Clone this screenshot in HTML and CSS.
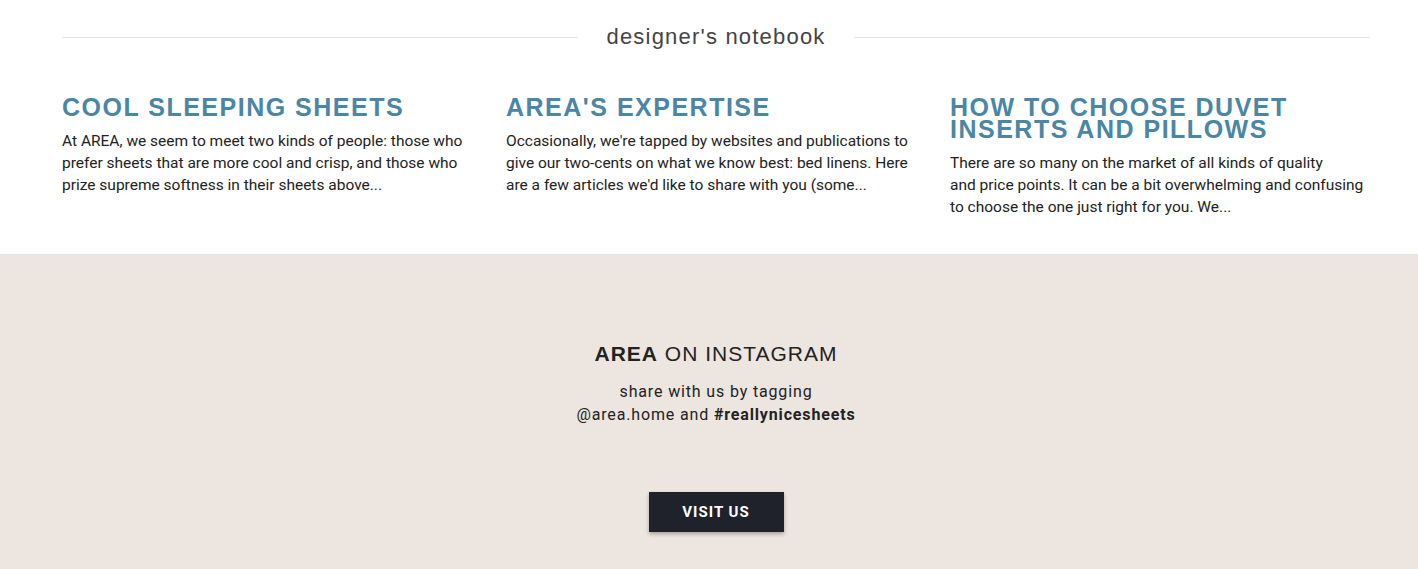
FILE: index.html
```html
<!DOCTYPE html>
<html>
<head>
<meta charset="utf-8">
<link rel="stylesheet" href="styles.css">
</head>
<body>
<section class="notebook">
  <div class="wrap">
    <div class="divider">
      <span class="rule"></span>
      <h2 class="divider-title">designer's notebook</h2>
      <span class="rule"></span>
    </div>
    <div class="posts">
      <article class="post">
        <h3 class="post-title">COOL SLEEPING SHEETS</h3>
        <p class="post-text">At AREA, we seem to meet two kinds of people: those who prefer sheets that are more cool and crisp, and those who prize supreme softness in their sheets above...</p>
      </article>
      <article class="post">
        <h3 class="post-title">AREA'S EXPERTISE</h3>
        <p class="post-text">Occasionally, we're tapped by websites and publications to give our two-cents on what we know best: bed linens. Here are a few articles we'd like to share with you (some...</p>
      </article>
      <article class="post">
        <h3 class="post-title">HOW TO CHOOSE DUVET INSERTS AND PILLOWS</h3>
        <p class="post-text">There are so many on the market of all kinds of quality<br>and price points. It can be a bit overwhelming and confusing to choose the one just right for you. We...</p>
      </article>
    </div>
  </div>
</section>
<section class="instagram">
  <div class="wrap insta-inner">
    <h2 class="insta-title"><strong>AREA</strong> ON INSTAGRAM</h2>
    <p class="insta-text">share with us by tagging<br>@area.home and <strong>#reallynicesheets</strong></p>
    <a class="btn" href="#">VISIT US</a>
  </div>
</section>
</body>
</html>
```

FILE: styles.css
```css
* { box-sizing: border-box; }
html, body { margin: 0; padding: 0; }
body {
  font-family: Roboto, "Liberation Sans", sans-serif;
  color: #222;
  background: #ede5e0;
}
.wrap {
  margin-left: 62px;
  width: 1308px;
}
.notebook {
  background: #fff;
  padding-top: 22px;
  padding-bottom: 36px;
}
.divider {
  display: flex;
  align-items: center;
  gap: 28px;
}
.rule {
  flex: 1;
  height: 1px;
  background: #e4e4e4;
}
.divider-title {
  margin: 0;
  font-family: "Liberation Sans", Arial, sans-serif;
  font-weight: 400;
  font-size: 22px;
  letter-spacing: 1.2px;
  line-height: 30px;
  color: #444;
}
.posts {
  display: grid;
  grid-template-columns: repeat(3, 420px);
  column-gap: 24px;
  margin-top: 44px;
}
.post-title {
  margin: 0;
  font-family: "Liberation Sans", Arial, sans-serif;
  font-weight: 700;
  font-size: 25px;
  line-height: 22px;
  letter-spacing: 1.5px;
  color: #4a86a5;
}
.post-text {
  margin: 12px 0 0;
  font-size: 15.5px;
  line-height: 22px;
  color: #222;
}
.instagram {
  background: #ede5e0;
  padding-top: 87px;
  padding-bottom: 37px;
}
.insta-inner {
  display: flex;
  flex-direction: column;
  align-items: center;
}
.insta-title {
  margin: 0;
  font-family: "Liberation Sans", Arial, sans-serif;
  font-weight: 400;
  font-size: 21px;
  letter-spacing: 1px;
  line-height: 26px;
  color: #222;
}
.insta-title strong { font-weight: 700; }
.insta-text {
  margin: 13px 0 0;
  text-align: center;
  font-size: 16px;
  line-height: 23px;
  letter-spacing: 0.85px;
  color: #222;
}
.insta-text strong { font-weight: 700; }
.btn {
  margin-top: 66px;
  display: block;
  width: 135px;
  height: 40px;
  line-height: 40px;
  text-align: center;
  background: #1f222b;
  color: #fff;
  font-weight: 700;
  font-size: 15px;
  letter-spacing: 1px;
  text-decoration: none;
  box-shadow: 0 2px 4px rgba(0,0,0,0.3);
}
```
